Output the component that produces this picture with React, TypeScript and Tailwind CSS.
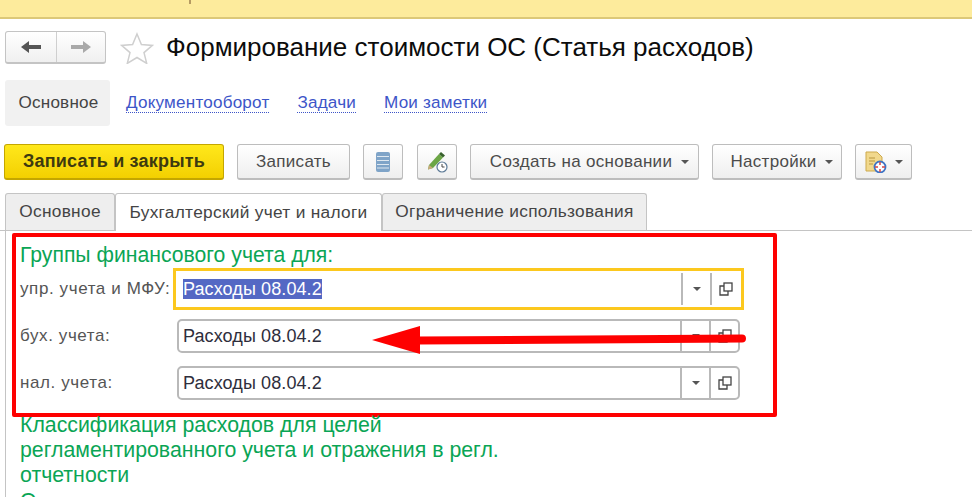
const font = { fontFamily: '"Liberation Sans", Arial, sans-serif' };

function Caret({ className = "" }: { className?: string }) {
  return (
    <svg width="8" height="4" viewBox="0 0 8 4" className={className}>
      <path d="M0 0h8L4 4z" fill="#555" />
    </svg>
  );
}

function Btn({ children, className = "" }: { children: React.ReactNode; className?: string }) {
  return (
    <div className={`flex h-[36px] shrink-0 items-center justify-center rounded-[3px] border border-[#bdbdbd] border-b-2 bg-gradient-to-b from-white to-[#efefef] text-[17px] tracking-[0.3px] text-[#4b4b4b] ${className}`}>
      {children}
    </div>
  );
}

function Field({ label, focused = false }: { label: string; focused?: boolean }) {
  const box = focused
    ? "h-[42px] w-[571px] border-[3px] border-[#fcc81e] pl-[7px] pr-0"
    : "h-[34px] w-[563px] ml-[4px] mr-[4px] rounded-[5px] border-2 border-[#b9b9b9] pl-[4px]";
  return (
    <div className="flex items-center">
      <div className="w-[153px] shrink-0 whitespace-nowrap text-[17px] tracking-[0.6px] text-[#555]">{label}</div>
      <div className={`flex shrink-0 items-center bg-white ${box}`}>
        <div className="flex-1 text-[18px] tracking-[0.1px] text-[#2e2e3c]">
          {focused ? <span className="bg-[#5468c4] text-white">Расходы 08.04.2</span> : "Расходы 08.04.2"}
        </div>
        <div className={`flex w-[29px] items-center justify-center self-stretch border-l-2 border-[#b9b9b9] ${focused ? "my-[2px]" : ""}`}>
          <Caret />
        </div>
        <div className={`flex w-[29px] items-center justify-center self-stretch border-l-2 border-[#b9b9b9] ${focused ? "my-[2px] mr-[2px]" : ""}`}>
          <svg width="14" height="14" viewBox="0 0 14 14" fill="none" stroke="#444" strokeWidth="1.3">
            <rect x="5" y="1" width="8" height="8" />
            <path d="M5 4H1v9h8V9" />
          </svg>
        </div>
      </div>
    </div>
  );
}

export default function App() {
  return (
    <div style={font} className="relative h-[497px] w-[972px] overflow-hidden bg-white">
      <div className="h-[19px] border-b-2 border-[#dcc878] bg-[#fdeb9c]">
        <div className="ml-[189px] h-[4px] w-[2px] bg-[#b59a62]" />
      </div>

      <div className="mt-[12px] flex h-[33px] items-center pl-[5px]">
        <div className="flex h-[33px] w-[101px] rounded-[3px] border border-[#c4c4c4] border-b-2 bg-gradient-to-b from-white to-[#f0f0f0]">
          <div className="flex w-[51px] items-center justify-center border-r border-[#cfcfcf]">
            <svg width="20" height="14" viewBox="0 0 20 14"><path d="M0 7l8-6v4h12v4H8v4z" fill="#555" /></svg>
          </div>
          <div className="flex flex-1 items-center justify-center">
            <svg width="20" height="14" viewBox="0 0 20 14"><path d="M20 7l-8-6v4H0v4h12v4z" fill="#a9a9a9" /></svg>
          </div>
        </div>
        <svg width="34" height="32" viewBox="0 0 34 32" className="ml-[14px]" fill="none" stroke="#cfcfcf" strokeWidth="1.5">
          <path d="M17 2l4.4 10.6 11 .8-8.400 7.200 2.700 10.800L17 25.500 7.300 31.400l2.700-10.800-8.400-7.200 11-.8z" />
        </svg>
        <div className="ml-[12px] whitespace-nowrap text-[26px] text-[#0c0c0c]">Формирование стоимости ОС (Статья расходов)</div>
      </div>

      <div className="mt-[16px] flex h-[46px] items-center pl-[5px] text-[17.1px] tracking-[0.2px]">
        <div className="flex h-full w-[105px] items-center justify-center rounded-[3px] bg-[#f1f1f1] pl-[2px] text-[#444]">Основное</div>
        <a className="ml-[16px] border-b border-dotted border-[#3d55c8] leading-[19px] text-[#3d55c8]">Документооборот</a>
        <a className="ml-[28px] border-b border-dotted border-[#3d55c8] leading-[19px] text-[#3d55c8]">Задачи</a>
        <a className="ml-[28px] border-b border-dotted border-[#3d55c8] leading-[19px] text-[#3d55c8]">Мои заметки</a>
      </div>

      <div className="mt-[18px] flex items-center pl-[4px]">
        <div className="flex h-[36px] w-[220px] shrink-0 items-center justify-center rounded-[3px] border border-[#c4a600] border-b-2 bg-gradient-to-b from-[#ffe81a] to-[#f3d000] text-[18px] font-bold tracking-[0.2px] text-[#3d3a10]">
          Записать и закрыть
        </div>
        <Btn className="ml-[13px] w-[113px]">Записать</Btn>
        <Btn className="ml-[13px] w-[40px]">
          <svg width="14" height="20" viewBox="0 0 14 20">
            <rect width="14" height="20" rx="2" fill="#7fa4c8" />
            <path d="M1 4.500h12M1 8.500h12M1 12.500h12M1 16h12" stroke="#dfe8f0" strokeWidth="1.200" />
          </svg>
        </Btn>
        <Btn className="ml-[14px] w-[40px]">
          <svg width="22" height="22" viewBox="0 0 22 22">
            <path d="M3 14L13 3l4 3.500L7 17l-5 1.500z" fill="#6ca646" />
            <path d="M13 3l2-2 4 3.500-2 2z" fill="#37602c" />
            <path d="M2 18.500L3 14l4 3z" fill="#c9a97a" />
            <circle cx="16" cy="16" r="5" fill="#fff" stroke="#5d7a96" strokeWidth="1.200" />
            <path d="M16 13v3h2.500" stroke="#444" fill="none" />
          </svg>
        </Btn>
        <Btn className="ml-[13px] w-[229px] gap-[9px] pl-[10px]">Создать на основании <Caret /></Btn>
        <Btn className="ml-[13px] w-[130px] gap-[8px] pl-[9px]">Настройки <Caret /></Btn>
        <Btn className="ml-[13px] w-[57px] gap-[8px]">
          <svg width="22" height="22" viewBox="0 0 22 22">
            <path d="M1 1h11l5 5v14H1z" fill="#f1d88c" stroke="#cda94c" />
            <path d="M4 7h6M4 10h6M4 13h4" stroke="#b8963e" />
            <circle cx="15" cy="16" r="5.500" fill="#fff" stroke="#3f74c4" strokeWidth="1.800" />
            <path d="M15 11v3M15 18v3M10 16h3M17 16h3" stroke="#d94444" strokeWidth="1.500" />
          </svg>
          <Caret />
        </Btn>
      </div>

      <div className="mt-[13px] flex h-[38px] items-end border-b border-[#c4c4c4] pl-[5px] text-[17.3px] tracking-[0.3px] text-[#444]">
        <div className="flex h-[37px] w-[110px] items-center justify-center rounded-t-[3px] border border-b-0 border-[#c4c4c4] bg-[#eeeeee]">Основное</div>
        <div className="relative -mb-px flex h-[38px] w-[267px] items-center justify-center rounded-t-[3px] border border-b-0 border-[#c4c4c4] bg-white">Бухгалтерский учет и налоги</div>
        <div className="flex h-[37px] w-[265px] items-center justify-center rounded-t-[3px] border border-b-0 border-[#c4c4c4] bg-[#eeeeee]">Ограничение использования</div>
      </div>

      <div className="ml-[5px] border-l border-[#c4c4c4] pl-[6px] pt-[2px]">
        <div className="h-[184px] w-[765px] rounded-[2px] border-[4px] border-[#fe0000] pl-[4px] pt-[5px]">
          <div className="text-[21.2px] leading-[26px] text-[#0aa555]">Группы финансового учета для:</div>
          <div className="flex flex-col">
            <div className="h-[42px]"><Field label="упр. учета и МФУ:" focused /></div>
            <div className="mt-[9px] h-[34px]"><Field label="бух. учета:" /></div>
            <div className="mt-[13px] h-[34px]"><Field label="нал. учета:" /></div>
          </div>
        </div>
        <div className="-mt-[4px] w-[520px] pl-[8px] text-[21.3px] leading-[25px] text-[#0aa555]">
          Классификация расходов для целей регламентированного учета и отражения в регл. отчетности
          <div className="mt-[1px]">О</div>
        </div>
      </div>

      <svg width="380" height="34" viewBox="0 0 380 34" className="absolute left-[370px] top-[323px]">
        <path d="M2 17L50 3v28z" fill="#fe0000" />
        <path d="M48 17.500L372 15.500" stroke="#fe0000" strokeWidth="8" strokeLinecap="round" fill="none" />
      </svg>
    </div>
  );
}
